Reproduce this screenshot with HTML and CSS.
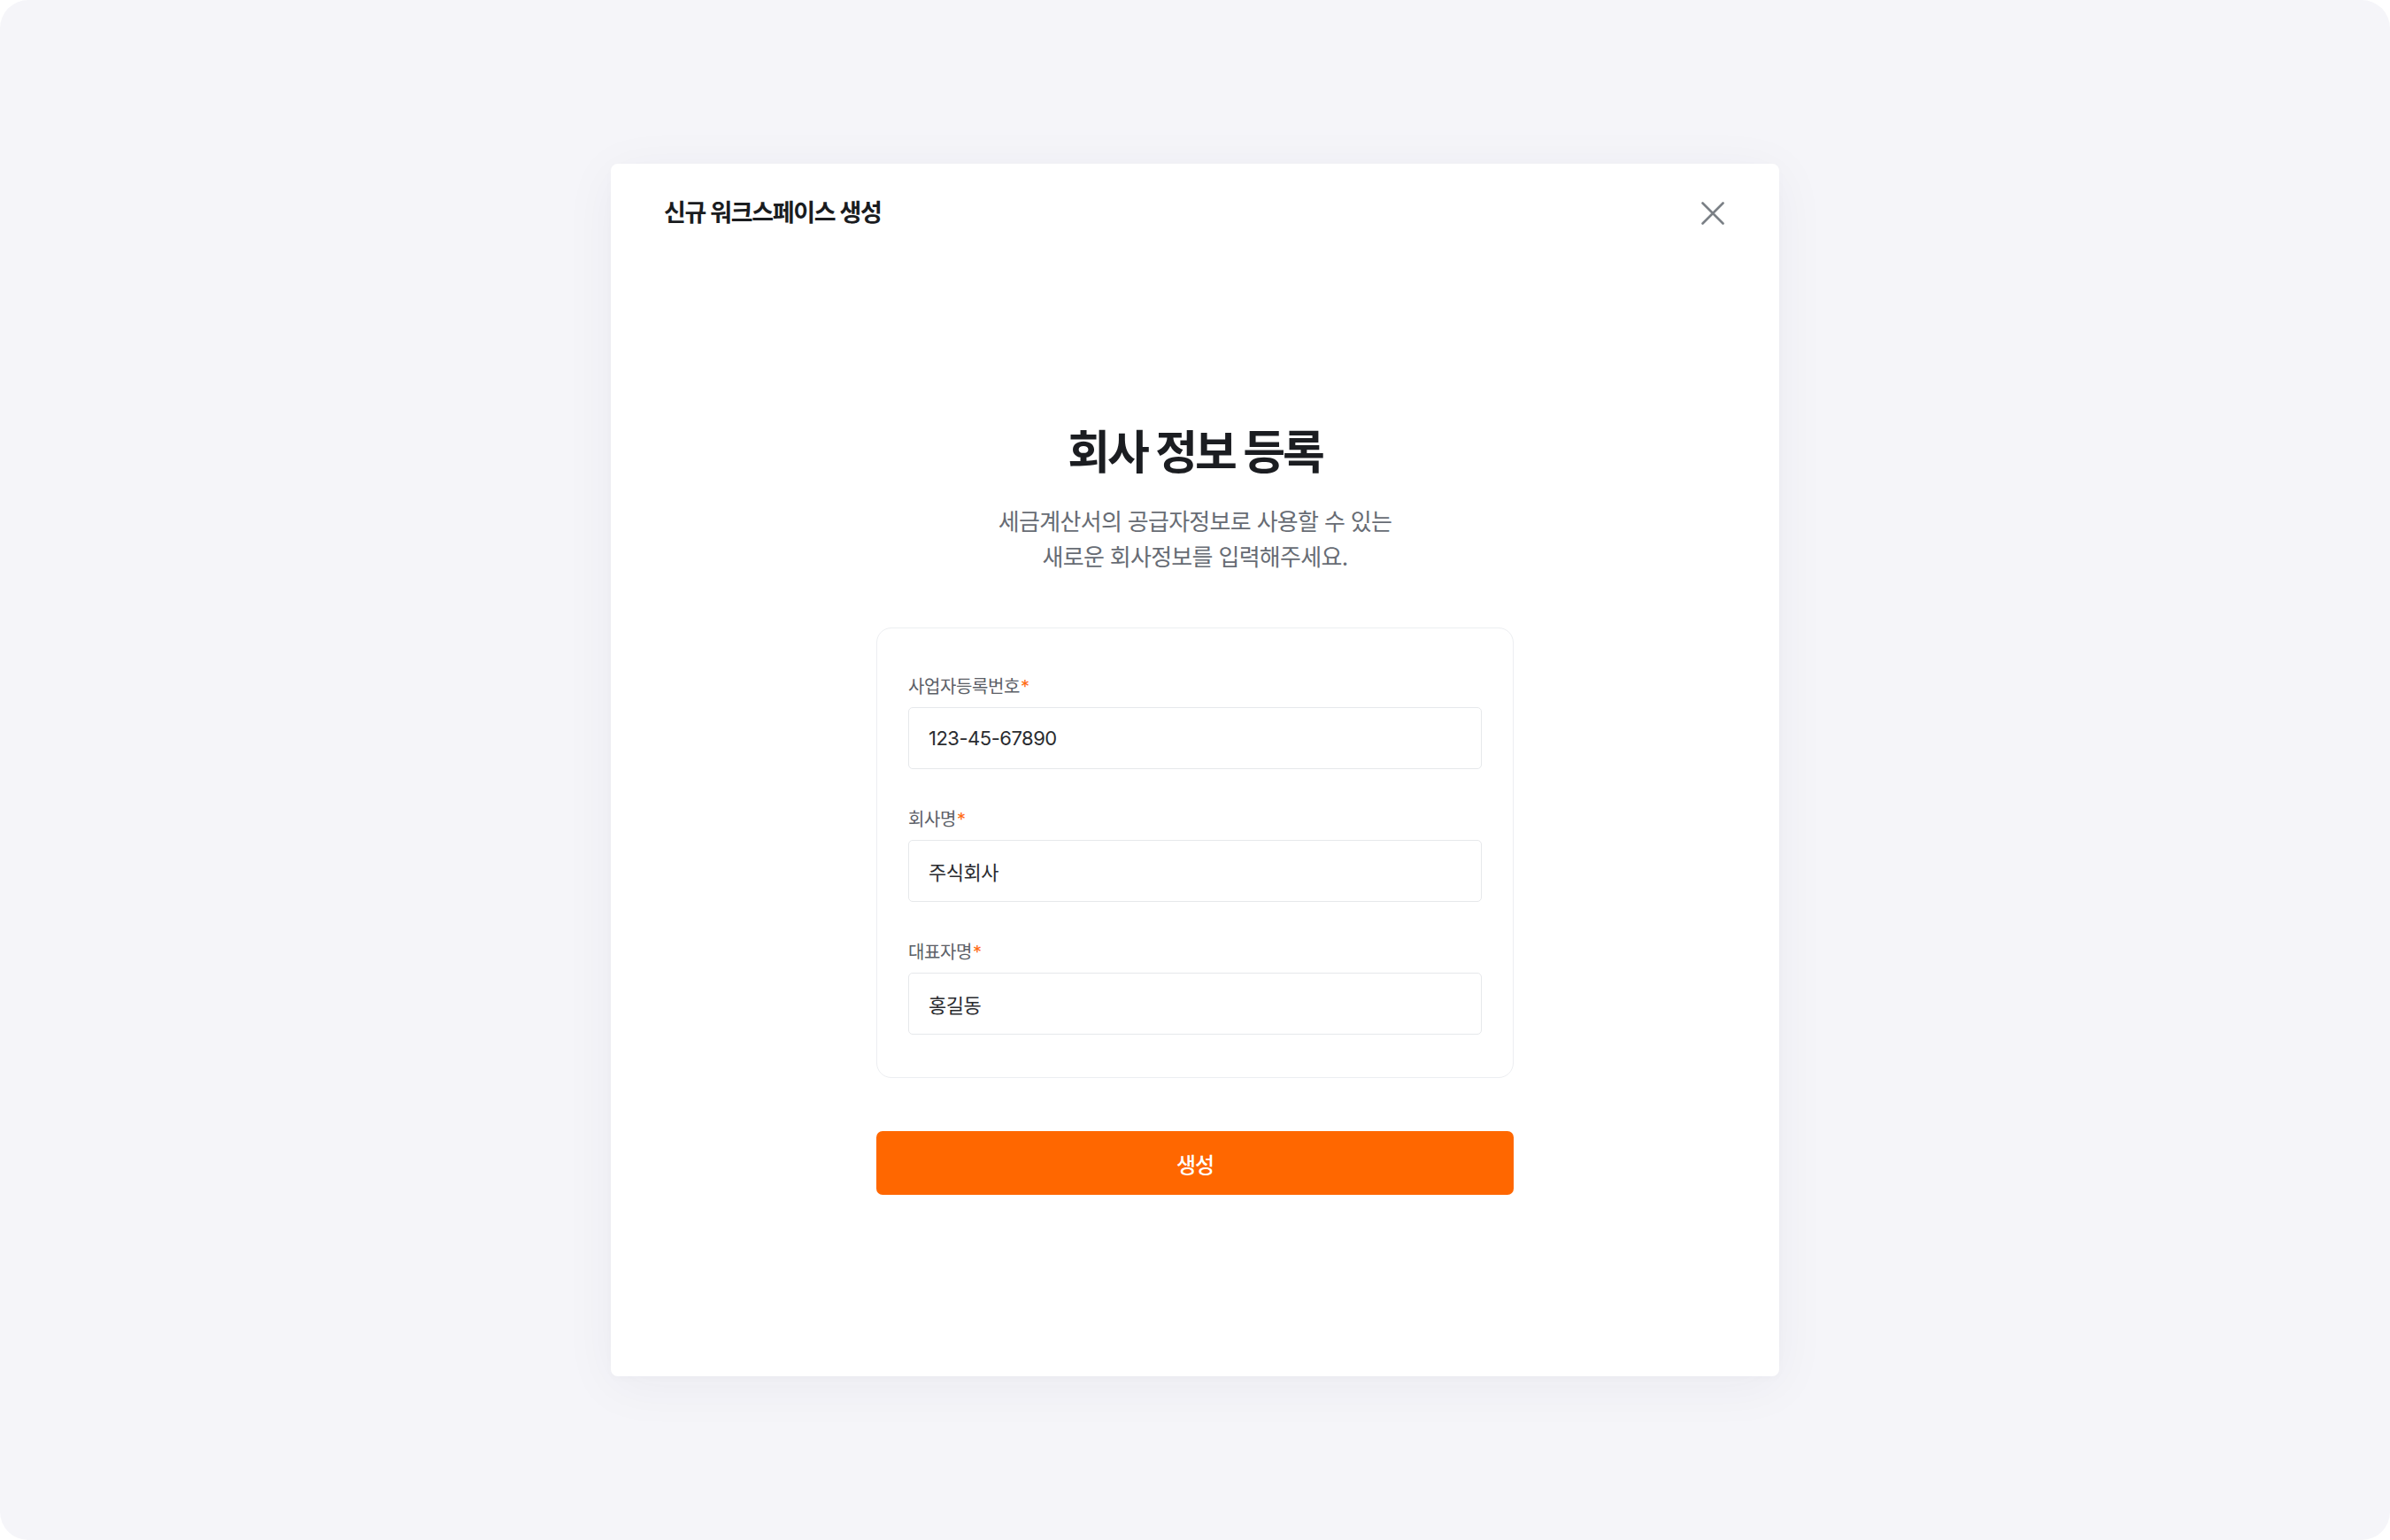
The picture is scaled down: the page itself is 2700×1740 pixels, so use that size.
FILE: index.html
```html
<!DOCTYPE html>
<html lang="ko">
<head>
<meta charset="utf-8">
<title>신규 워크스페이스 생성</title>
<link rel="stylesheet" href="styles.css">
</head>
<body>
<div class="page">
  <div class="modal" role="dialog" aria-labelledby="modal-title">
    <div class="modal-header">
      <h2 id="modal-title" class="modal-title">신규 워크스페이스 생성</h2>
      <button class="close-btn" type="button" aria-label="닫기">
        <svg width="26" height="26" viewBox="0 0 26 26" fill="none">
          <path d="M1.5 1.5L24.5 24.5M24.5 1.5L1.5 24.5" stroke="#7b8086" stroke-width="2.6" stroke-linecap="round"/>
        </svg>
      </button>
    </div>
    <div class="modal-body">
      <h1 class="heading">회사 정보 등록</h1>
      <p class="subtitle">세금계산서의 공급자정보로 사용할 수 있는<br>새로운 회사정보를 입력해주세요.</p>
      <div class="form-card">
        <div class="field">
          <label class="field-label">사업자등록번호<span class="req">*</span></label>
          <div class="input">123-45-67890</div>
        </div>
        <div class="field">
          <label class="field-label">회사명<span class="req">*</span></label>
          <div class="input">주식회사</div>
        </div>
        <div class="field">
          <label class="field-label">대표자명<span class="req">*</span></label>
          <div class="input">홍길동</div>
        </div>
      </div>
      <button class="submit-btn" type="button">생성</button>
    </div>
  </div>
</div>
</body>
</html>
```

FILE: styles.css
```css
* {
  box-sizing: border-box;
}

html, body {
  margin: 0;
  padding: 0;
  background: #ffffff;
}

body {
  font-family: Inter, "Noto Sans CJK KR", "Noto Sans", sans-serif;
  color: #1b1d21;
}

.page {
  width: 2700px;
  height: 1740px;
  background: #f5f5f9;
  border-radius: 32px;
  display: flex;
  align-items: center;
  justify-content: center;
}

.modal {
  width: 1320px;
  background: #ffffff;
  border-radius: 8px;
  box-shadow: 0 10px 60px rgba(30, 40, 80, 0.05), 0 2px 10px rgba(30, 40, 80, 0.02);
  padding-bottom: 205px;
}

.modal-header {
  display: flex;
  align-items: center;
  justify-content: space-between;
  padding: 36px 62px 0 60px;
  height: 76px;
}

.modal-title {
  margin: 0;
  font-size: 27px;
  line-height: 40px;
  font-weight: 700;
  letter-spacing: -1.3px;
  color: #1a1c1f;
}

.close-btn {
  width: 26px;
  height: 26px;
  padding: 0;
  border: 0;
  background: transparent;
  display: flex;
  cursor: pointer;
}

.modal-body {
  display: flex;
  flex-direction: column;
  align-items: center;
  padding-top: 219px;
}

.heading {
  margin: 0;
  font-size: 52px;
  line-height: 64px;
  font-weight: 700;
  letter-spacing: -3px;
  color: #1b1d21;
}

.subtitle {
  margin: 26px 0 0;
  font-size: 26px;
  line-height: 40px;
  font-weight: 400;
  letter-spacing: -0.7px;
  color: #676c74;
  text-align: center;
}

.form-card {
  margin-top: 59px;
  width: 720px;
  border: 1px solid #eceef1;
  border-radius: 17px;
  padding: 49px 35px 48px;
  display: flex;
  flex-direction: column;
  gap: 40px;
}

.field {
  display: flex;
  flex-direction: column;
  gap: 6px;
}

.field-label {
  font-size: 20px;
  line-height: 34px;
  letter-spacing: -0.4px;
  color: #5b6067;
}

.req {
  color: #ff6a13;
  margin-left: 1px;
}

.input {
  height: 70px;
  border: 1px solid #e6e8eb;
  border-radius: 5px;
  padding: 0 22px;
  display: flex;
  align-items: center;
  font-size: 22px;
  letter-spacing: -0.5px;
  color: #2a2c30;
}

.submit-btn {
  margin-top: 60px;
  width: 720px;
  height: 72px;
  border: 0;
  border-radius: 7px;
  background: #ff6700;
  color: #ffffff;
  font-family: Inter, "Noto Sans CJK KR", sans-serif;
  font-size: 24px;
  font-weight: 500;
  letter-spacing: -1px;
  cursor: pointer;
}
```
